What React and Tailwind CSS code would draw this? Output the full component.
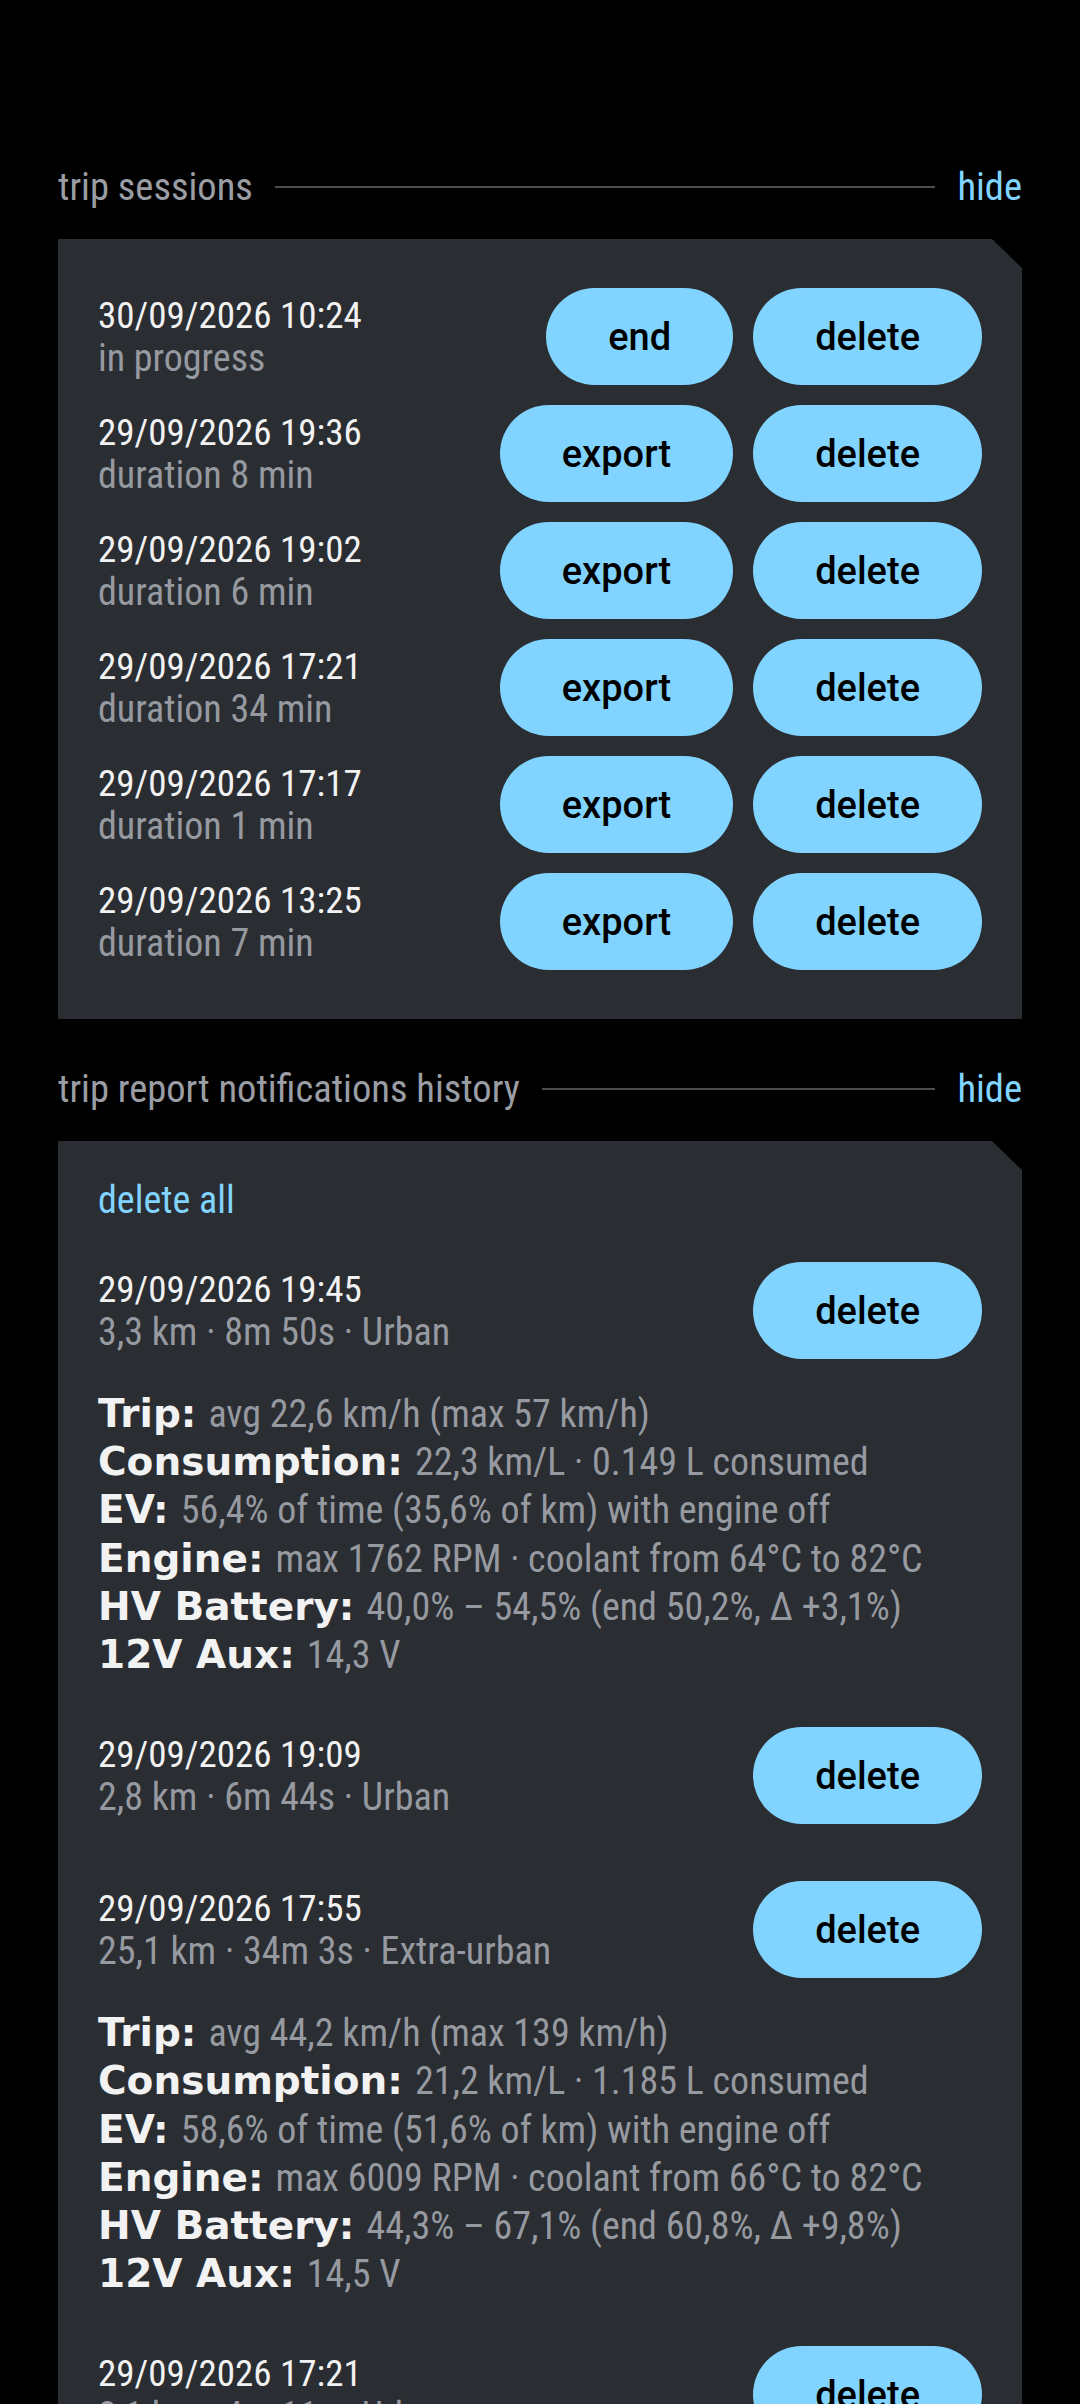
import React from 'react';

const sessions = [
  { date: '30/09/2026 10:24', info: 'in progress', active: true },
  { date: '29/09/2026 19:36', info: 'duration 8 min' },
  { date: '29/09/2026 19:02', info: 'duration 6 min' },
  { date: '29/09/2026 17:21', info: 'duration 34 min' },
  { date: '29/09/2026 17:17', info: 'duration 1 min' },
  { date: '29/09/2026 13:25', info: 'duration 7 min' },
];

const notifications = [
  {
    date: '29/09/2026 19:45',
    info: '3,3 km · 8m 50s · Urban',
    details: [
      ['Trip:', 'avg 22,6 km/h (max 57 km/h)'],
      ['Consumption:', '22,3 km/L · 0.149 L consumed'],
      ['EV:', '56,4% of time (35,6% of km) with engine off'],
      ['Engine:', 'max 1762 RPM · coolant from 64°C to 82°C'],
      ['HV Battery:', '40,0% – 54,5% (end 50,2%, Δ +3,1%)'],
      ['12V Aux:', '14,3 V'],
    ],
  },
  { date: '29/09/2026 19:09', info: '2,8 km · 6m 44s · Urban', details: [] },
  {
    date: '29/09/2026 17:55',
    info: '25,1 km · 34m 3s · Extra-urban',
    details: [
      ['Trip:', 'avg 44,2 km/h (max 139 km/h)'],
      ['Consumption:', '21,2 km/L · 1.185 L consumed'],
      ['EV:', '58,6% of time (51,6% of km) with engine off'],
      ['Engine:', 'max 6009 RPM · coolant from 66°C to 82°C'],
      ['HV Battery:', '44,3% – 67,1% (end 60,8%, Δ +9,8%)'],
      ['12V Aux:', '14,5 V'],
    ],
  },
  {
    date: '29/09/2026 17:21',
    info: '2,1 km · 4m 11s · Urban',
    details: [],
  },
];

const condensed = "font-['Roboto_Condensed','Liberation_Sans_Narrow',Roboto,sans-serif] [font-stretch:condensed]";

const PillButton = ({ children }) => (
  <button className="h-[97px] px-[62px] rounded-full bg-[#80d4ff] text-black font-['Roboto',sans-serif] text-[38px] font-medium leading-none">
    {children}
  </button>
);

const SectionHeader = ({ title }) => (
  <div className={`flex items-center gap-[22px] h-[48px] ${condensed} text-[38.5px]`}>
    <span className="text-[#9a9ea4]">{title}</span>
    <div className="flex-1 h-[2px] bg-[#4a4d52]" />
    <span className="text-[#80d4ff]">hide</span>
  </div>
);

const Card = ({ children, className }) => (
  <div className={`bg-[#2a2d32] px-[40px] [clip-path:polygon(0_0,calc(100%_-_30px)_0,100%_29px,100%_100%,0_100%)] ${className}`}>
    {children}
  </div>
);

const DateBlock = ({ date, info }) => (
  <div className={`${condensed} leading-[43px]`}>
    <div className="text-[37px] text-[#f2f2f2]">{date}</div>
    <div className="text-[38px] text-[#969aa0]">{info}</div>
  </div>
);

export default function App() {
  return (
    <div className="min-h-screen bg-black px-[58px] pt-[163px] pb-[40px]">
      <SectionHeader title="trip sessions" />

      <Card className="mt-[28px] py-[49px] flex flex-col gap-[20px]">
        {sessions.map((s) => (
          <div key={s.date} className="flex items-center justify-between">
            <DateBlock date={s.date} info={s.info} />
            <div className="flex gap-[20px]">
              <PillButton>{s.active ? 'end' : 'export'}</PillButton>
              <PillButton>delete</PillButton>
            </div>
          </div>
        ))}
      </Card>

      <div className="mt-[46px]">
        <SectionHeader title="trip report notifications history" />
      </div>

      <Card className="mt-[28px] pt-[35px] pb-[60px]">
        <div className={`${condensed} text-[38px] leading-[48px] text-[#80d4ff]`}>
          delete all
        </div>

        <div className="mt-[38px] flex flex-col">
          {notifications.map((n, i) => (
            <div key={n.date} className={i === 0 ? '' : 'mt-[48px]'}>
              <div className="flex items-center justify-between">
                <DateBlock date={n.date} info={n.info} />
                <PillButton>delete</PillButton>
              </div>
              {n.details.length > 0 ? (
                <div className="mt-[31px]">
                  {n.details.map(([label, value]) => (
                    <div key={label} className="h-[48.2px] leading-[48px] whitespace-nowrap">
                      <span className="font-['DejaVu_Sans',sans-serif] font-bold text-[39px] leading-[48px] text-[#f2f2f2]">{label}</span>
                      <span className={`ml-[12px] ${condensed} text-[38px] leading-[48px] text-[#969aa0]`}>{value}</span>
                    </div>
                  ))}
                </div>
              ) : (
                <div className="h-[9px]" />
              )}
            </div>
          ))}
        </div>
      </Card>
    </div>
  );
}
